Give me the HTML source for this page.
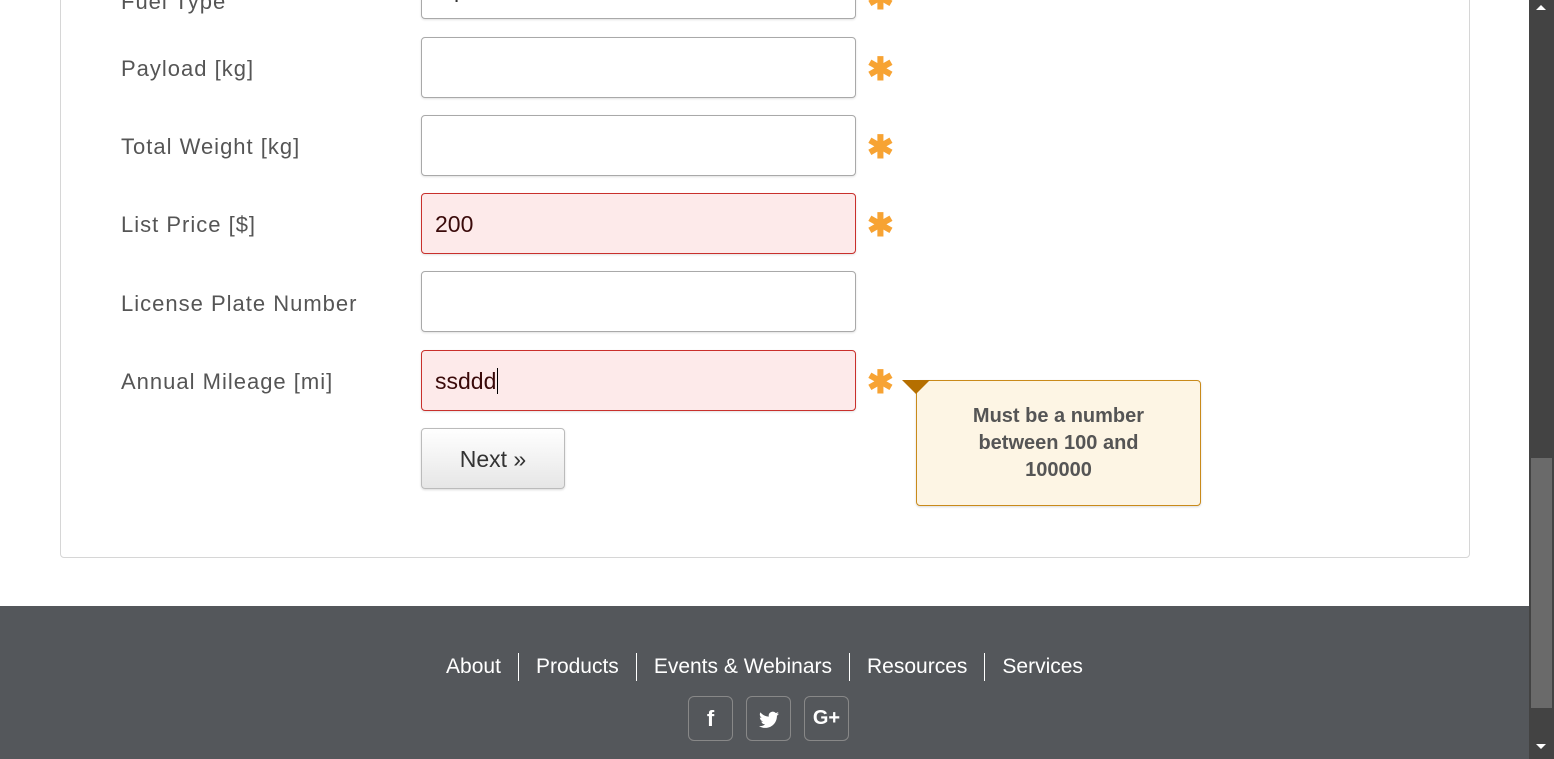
<!DOCTYPE html>
<html><head><style>
*{box-sizing:border-box;margin:0;padding:0}
html,body{width:1554px;height:759px;overflow:hidden;background:#fff;font-family:"Liberation Sans",sans-serif}
.card{position:absolute;left:60px;top:-20px;width:1410px;height:578px;border:1px solid #d6d6d6;border-radius:4px}
.lbl{position:absolute;left:121px;font-size:22px;color:#555;font-weight:300;letter-spacing:1px}
.in{position:absolute;left:421px;width:435px;height:61px;border:1px solid #a9a9a9;border-radius:4px;background:#fff;box-shadow:0 1px 2px rgba(0,0,0,.12);font-size:23px;color:#3a0a0a;padding:17px 13px}
.err{background:#fdeaea;border-color:#c9302c}
.ast{position:absolute;left:867px;font-size:32px;color:#f7a333;font-weight:bold;line-height:1}
.btn{position:absolute;left:421px;top:428px;width:144px;height:61px;border:1px solid #bbb;border-radius:4px;background:linear-gradient(#fff,#e6e6e6);box-shadow:0 1px 2px rgba(0,0,0,.15);font-size:23px;color:#333;text-align:center;line-height:61px}
.tip{position:absolute;left:916px;top:380px;width:285px;height:126px;border:1px solid #c98a1a;border-radius:4px;background:#fdf5e4;color:#555;font-size:20px;font-weight:bold;text-align:center;line-height:27px;padding-top:22px;box-shadow:0 1px 2px rgba(0,0,0,.15)}
.tri{position:absolute;left:902px;top:380px;width:0;height:0;border-left:14px solid transparent;border-right:14px solid transparent;border-top:14px solid #b56f00}
.foot{position:absolute;left:0;top:606px;width:1529px;height:153px;background:#54575b}
.nav{position:absolute;top:653px;left:0;width:1529px;text-align:center;color:#fff;font-size:21px;font-weight:300}
.nav span{display:inline-block;padding:0 17px;border-left:1px solid #fff;line-height:28px}
.nav span:first-child{border-left:none}
.soc{position:absolute;top:696px;width:45px;height:45px;border:1px solid #888;border-radius:6px;color:#fff;text-align:center;line-height:43px;font-weight:bold;font-size:22px}
.sb{position:absolute;left:1529px;top:0;width:25px;height:759px;background:#434343}
.thumb{position:absolute;left:1531px;top:458px;width:21px;height:250px;background:#6a6a6a}
</style></head><body>
<div class="card"></div>
<div class="lbl" style="top:-11px">Fuel Type</div>
<div class="in" style="top:-42px;padding-left:32px;color:#333">please select</div>
<div class="ast" style="top:-18px">✱</div>

<div class="lbl" style="top:56px">Payload [kg]</div>
<div class="in" style="top:37px"></div><div class="ast" style="top:53px">✱</div>
<div class="lbl" style="top:134px">Total Weight [kg]</div>
<div class="in" style="top:115px"></div><div class="ast" style="top:131px">✱</div>
<div class="lbl" style="top:212px">List Price [$]</div>
<div class="in err" style="top:193px">200</div><div class="ast" style="top:209px">✱</div>
<div class="lbl" style="top:291px">License Plate Number</div>
<div class="in" style="top:271px"></div>
<div class="lbl" style="top:369px">Annual Mileage [mi]</div>
<div class="in err" style="top:350px">ssddd<span style="border-left:1px solid #000;margin-left:1px"></span></div><div class="ast" style="top:366px">✱</div>
<div class="btn">Next »</div>
<div class="tip">Must be a number<br>between 100 and<br>100000</div>
<div class="tri"></div>

<div class="foot"></div>
<div class="nav"><span>About</span><span>Products</span><span>Events &amp; Webinars</span><span>Resources</span><span>Services</span></div>
<div class="soc" style="left:688px">f</div>
<div class="soc" style="left:746px"><svg width="20" height="18" viewBox="0 0 24 20" style="vertical-align:middle"><path fill="#fff" d="M24 2.4a10 10 0 0 1-2.8.8A5 5 0 0 0 23.3.4a10 10 0 0 1-3.1 1.2A4.9 4.9 0 0 0 11.8 6 14 14 0 0 1 1.7.9a4.9 4.9 0 0 0 1.5 6.6A4.9 4.9 0 0 1 1 6.9a4.9 4.9 0 0 0 3.9 4.8 5 5 0 0 1-2.2.1 4.9 4.9 0 0 0 4.6 3.4A9.9 9.9 0 0 1 0 17.3 14 14 0 0 0 7.5 19.5c9.1 0 14-7.5 14-14v-.6A10 10 0 0 0 24 2.4z"/></svg></div>
<div class="soc" style="left:804px;font-size:20px">G+</div>
<div class="sb"></div><div class="thumb"></div>
<div style="position:absolute;left:1536px;top:5px;border-left:5px solid transparent;border-right:5px solid transparent;border-bottom:5px solid #fff"></div>
<div style="position:absolute;left:1536px;top:744px;border-left:5px solid transparent;border-right:5px solid transparent;border-top:5px solid #fff"></div>
</body></html>
